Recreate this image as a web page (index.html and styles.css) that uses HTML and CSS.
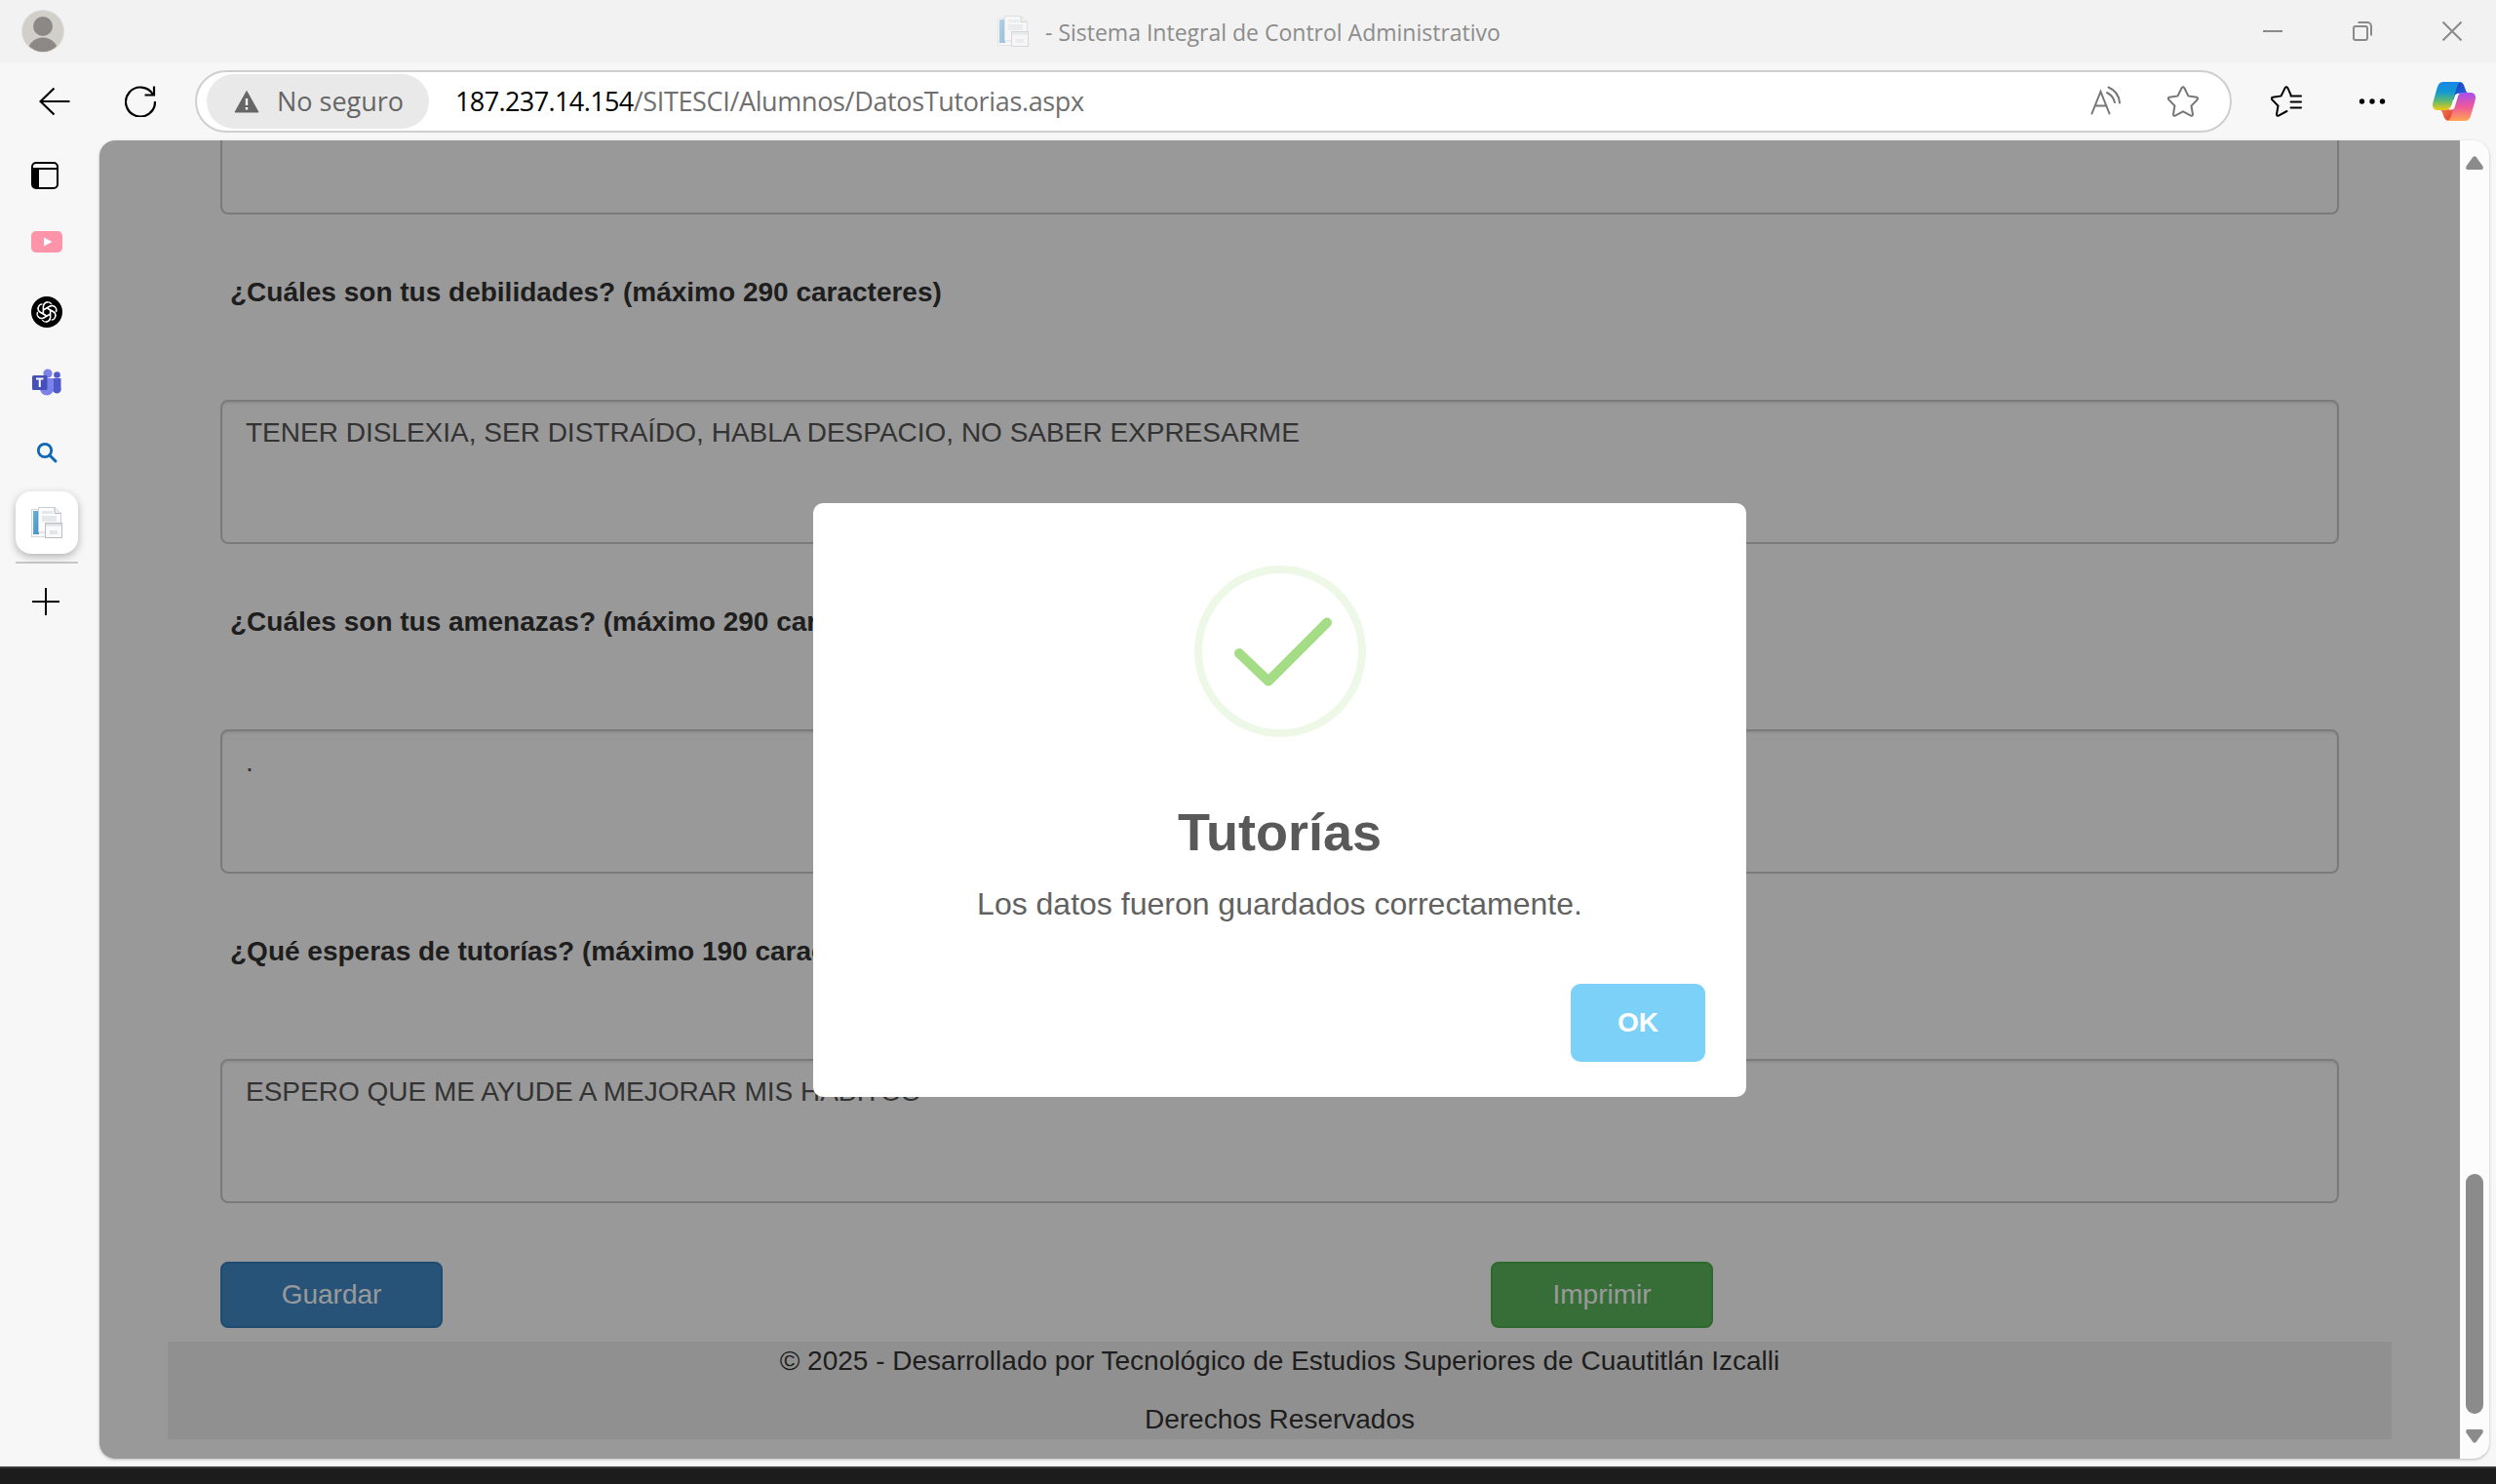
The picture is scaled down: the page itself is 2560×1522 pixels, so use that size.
FILE: index.html
```html
<!DOCTYPE html>
<html lang="es">
<head>
<meta charset="utf-8">
<title>Sistema Integral de Control Administrativo</title>
<link rel="stylesheet" href="styles.css">
</head>
<body>
<svg class="defs" width="0" height="0">
  <defs>
    <linearGradient id="page-blue" x1="0" y1="0" x2="1" y2="1"><stop offset="0" stop-color="#6db3dc"/><stop offset="1" stop-color="#3f8fc6"/></linearGradient>
    <linearGradient id="cp-left" x1="0" y1="0" x2="0" y2="1"><stop offset="0" stop-color="#1a86e8"/><stop offset=".35" stop-color="#1297d4"/><stop offset=".65" stop-color="#55b878"/><stop offset="1" stop-color="#f3cb10"/></linearGradient>
    <linearGradient id="cp-right" x1="0" y1="0" x2="0" y2="1"><stop offset="0" stop-color="#a54ff0"/><stop offset=".5" stop-color="#f0589a"/><stop offset="1" stop-color="#ffa552"/></linearGradient>
    <linearGradient id="cp-top" x1="0" y1="0" x2="1" y2="1"><stop offset="0" stop-color="#1440b8"/><stop offset="1" stop-color="#2a6ee8"/></linearGradient>
    <linearGradient id="cp-bottom" x1="0" y1="0" x2="1" y2="1"><stop offset="0" stop-color="#f9885a"/><stop offset="1" stop-color="#d9362c"/></linearGradient>
    <symbol id="doc" viewBox="0 0 32 32">
      <rect x=".5" y="2.500" width="20" height="28" fill="#fbfbfb" stroke="#d5d9dc"/>
      <rect x="2" y="4" width="6" height="24" fill="url(#page-blue)"/>
      <path d="M7.500 .5H24l6.500 6V26h-23z" fill="#fcfcfc" stroke="#c9cdd1"/>
      <path d="M24 .5v6h6.500" fill="#eee" stroke="#b5b9bd"/>
      <path d="M11 4h11v3H11zM11 9h15v6H11z" fill="#e5e8ea"/>
      <rect x="14.500" y="16.500" width="17" height="15" fill="#fafafa" stroke="#b9bdc1"/>
      <path d="M15 17h16v2.500H15z" fill="#dfe2e5"/><path d="M19 24h8v4h-8z" fill="#e3e6e9"/>
    </symbol>
  </defs>
</svg>

<header class="titlebar">
  <svg class="avatar" viewBox="0 0 44 44"><clipPath id="av"><circle cx="22" cy="22" r="21"/></clipPath><circle cx="22" cy="22" r="22" fill="#dddcd9"/><circle cx="22" cy="22" r="21" fill="#d0cfca"/><g clip-path="url(#av)" fill="#8c8885"><circle cx="22" cy="17" r="10"/><circle cx="22" cy="44.500" r="16"/></g></svg>
  <div class="window-title"><svg class="window-icon"><use href="#doc"/></svg><span>- Sistema Integral de Control Administrativo</span></div>
  <div class="window-controls">
    <svg viewBox="0 0 20 20"><path d="M0 10h20"/></svg>
    <svg viewBox="0 0 20 20"><rect x="1" y="5" width="14" height="14" rx="2"/><path d="M5.500 1H15a4 4 0 0 1 4 4v9.500"/></svg>
    <svg viewBox="0 0 20 20"><path d="M.5.5l19 19M19.500.5l-19 19"/></svg>
  </div>
</header>

<div class="toolbar">
  <svg class="nav-icon back" viewBox="0 0 32 32"><path d="M31.500 16H1.500M15.500 2.500L1.500 16l14 13.500"/></svg>
  <svg class="nav-icon reload" viewBox="0 0 32 32"><path d="M29 9A15 15 0 1 0 31 16M30 .5V9.500H20.500"/></svg>
  <div class="address">
    <div class="security">
      <svg class="warning" viewBox="0 0 26 24"><path d="M13 1.500L25 23H1z" fill="#666" stroke="#666" stroke-linejoin="round"/><path d="M11.800 9h2.400v7h-2.400zM11.800 18h2.400v2.400h-2.400z" fill="#fff"/></svg>
      <span>No seguro</span>
    </div>
    <div class="url"><b>187.237.14.154</b>/SITESCI/Alumnos/DatosTutorias.aspx</div>
    <svg class="bar-icon read" viewBox="0 0 32 32"><path d="M1.500 28.500L10.500 6l9 22.500M4.500 20.500h12M17 7a15 15 0 0 1 8 10M18.500 1.500a19 19 0 0 1 11.500 16"/></svg>
    <svg class="bar-icon" viewBox="0 0 32 32"><path d="M14.600 2.200q1.400-2 2.800 0l4 8.200 8.600 1.400q1.900.6.700 2.300l-6.200 6.400 1.500 8.800q-.1 2-2 1.300L16 26.400l-8 4.200q-1.900.7-2-1.300l1.500-8.800L1.300 14.100q-1.200-1.700.7-2.300l8.600-1.400z"/></svg>
  </div>
  <svg class="favorites" viewBox="0 0 32 32"><path d="M21 10.300L17.400 2.200q-1.400-2-2.800 0l-4 8.200-8.600 1.400q-1.900.6-.7 2.300l6.200 6.400L6 29.300q.1 2 2 1.300l8.500-4.600M20.500 10.500H31M20.500 16.500H31M20.500 22.500H31"/></svg>
  <svg class="more" viewBox="0 0 28 8"><circle cx="3.500" cy="4" r="2.700"/><circle cx="14" cy="4" r="2.700"/><circle cx="24.500" cy="4" r="2.700"/></svg>
  <svg class="copilot" viewBox="0 0 132 120">
    <path d="M62 0H80C93 0 96 8 100 20C103 30 106 34 112 35H84C74 36 70 42 66 56L60 50z" fill="url(#cp-top)"/>
    <path d="M70 120H52C39 120 36 112 32 100C29 90 26 86 20 85H48C58 84 62 78 66 64L72 70z" fill="url(#cp-bottom)"/>
    <path d="M34 0H92C80 1 77 8 73 22L60 66C56 80 50 86 36 87H16C1 87-3 77 2 60L14 18C18 6 23 0 34 0z" fill="url(#cp-left)"/>
    <path d="M98 120H40C52 119 55 112 59 98L72 54C76 40 82 34 96 33H116C131 33 135 43 130 60L118 102C114 114 109 120 98 120z" fill="url(#cp-right)"/>
    <path d="M76 36C84 34 80 38 78 44L68 78C66 84 60 87 50 86C57 82 59 75 62 66L67 47C69 40 71 37 76 36z" fill="#fff"/>
  </svg>
</div>

<div class="workspace">
  <nav class="tabs">
    <div class="tab"><svg class="panel" viewBox="0 0 28 28"><rect x="1" y="1" width="26" height="26" rx="4" fill="none" stroke="#000" stroke-width="2"/><path d="M1 7h26" stroke="#000" stroke-width="2"/><path d="M1 7h7v20H4q-3 0-3-3z"/></svg></div>
    <div class="tab tab-video"><svg width="32" height="22" viewBox="0 0 32 22"><rect width="32" height="22" rx="5" fill="#fd94aa"/><path d="M13 6.500l8.500 4.500-8.500 4.500z" fill="#fff"/></svg></div>
    <div class="tab"><svg width="32" height="32" viewBox="0 0 32 32"><circle cx="16" cy="16" r="16"/><g fill="none" stroke="#fff" stroke-width="1.300" stroke-linejoin="round"><path id="knot" d="M12.500 18.200V10.300a4.500 4.500 0 0 1 8.300-2.300M12.500 13.800l6.500-3.800a4.500 4.500 0 0 1 6.200 1.800"/><use href="#knot" transform="rotate(60 16 16)"/><use href="#knot" transform="rotate(120 16 16)"/><use href="#knot" transform="rotate(180 16 16)"/><use href="#knot" transform="rotate(240 16 16)"/><use href="#knot" transform="rotate(300 16 16)"/></g></svg></div>
    <div class="tab"><svg width="32" height="32" viewBox="0 0 32 32"><circle cx="26.500" cy="8.500" r="3.300" fill="#5059c9"/><path d="M22 12h8.500v9.500a4.500 4.500 0 0 1-8.500 3z" fill="#5059c9"/><circle cx="17" cy="7" r="4.600" fill="#7b83eb"/><path d="M9 12h14v10.500a7 7 0 0 1-14 0z" fill="#7b83eb"/><rect x="1" y="9" width="15.500" height="15" rx="1.500" fill="#464eb8"/><path d="M5 12.500h7.500M8.750 12.500v8.500" stroke="#fff" stroke-width="2"/></svg></div>
    <div class="tab"><svg width="32" height="32" viewBox="0 0 32 32" fill="none" stroke="#0f67b8"><circle cx="14" cy="14" r="6.700" stroke-width="2.800"/><path d="M19 19l6 6" stroke-width="3" stroke-linecap="round"/></svg></div>
    <div class="tab"><div class="active-tab"><svg width="32" height="32"><use href="#doc"/></svg></div></div>
    <div class="tab-divider"></div>
    <div class="tab tab-new"><svg width="28" height="28" viewBox="0 0 28 28"><path d="M0 14h28M14 0v28" stroke="#000" stroke-width="2"/></svg></div>
  </nav>

  <div class="viewport">
    <main class="page">
      <form class="form">
        <div class="field field-cut"></div>
        <label class="question">¿Cuáles son tus debilidades? (máximo 290 caracteres)</label>
        <div class="field">TENER DISLEXIA, SER DISTRAÍDO, HABLA DESPACIO, NO SABER EXPRESARME</div>
        <label class="question">¿Cuáles son tus amenazas? (máximo 290 caracteres)</label>
        <div class="field">.</div>
        <label class="question">¿Qué esperas de tutorías? (máximo 190 caracteres)</label>
        <div class="field">ESPERO QUE ME AYUDE A MEJORAR MIS HABITOS</div>
        <div class="actions"><div class="btn btn-primary">Guardar</div><div class="btn btn-success">Imprimir</div></div>
      </form>
      <footer class="footer"><p>© 2025 - Desarrollado por Tecnológico de Estudios Superiores de Cuautitlán Izcalli</p><p>Derechos Reservados</p></footer>
      <div class="overlay">
        <div class="modal">
          <svg class="success" viewBox="0 0 176 176" fill="none"><circle cx="88" cy="88" r="84" stroke="#edf8e7" stroke-width="8"/><path d="M46 90L76 118.500L136 58.500" stroke="#a5dc86" stroke-width="10" stroke-linecap="round" stroke-linejoin="round"/></svg>
          <h1>Tutorías</h1>
          <p>Los datos fueron guardados correctamente.</p>
          <div class="ok">OK</div>
        </div>
      </div>
    </main>
    <div class="scrollbar">
      <svg width="18" height="14" viewBox="0 0 18 14"><path d="M7 1.500q2-2.500 4 0l6.500 9q1 3.300-1.500 3.500H2Q-.500 13.800.5 10.500z"/></svg>
      <div class="thumb"></div>
      <svg width="18" height="14" viewBox="0 0 18 14"><path d="M7 12.500q2 2.500 4 0l6.500-9Q18.500.2 16 0H2Q-.500.2.500 3.500z"/></svg>
    </div>
  </div>
</div>
<div class="taskbar"></div>
</body>
</html>
```
FILE: styles.css
```css
* { box-sizing: border-box; }

body {
  margin: 0;
  width: 2560px;
  height: 1522px;
  display: flex;
  flex-direction: column;
  overflow: hidden;
  background: #f7f7f7;
  font-family: "Liberation Sans", Arial, sans-serif;
  font-size: 28px;
  line-height: 40px;
}

svg { display: block; flex: none; }
.defs { position: absolute; }

/* Window title bar */
.titlebar {
  height: 64px;
  flex: none;
  display: flex;
  align-items: center;
  justify-content: space-between;
  background: #f2f2f2;
  padding: 0 35px 0 22px;
  font-family: "Open Sans", "Noto Sans", sans-serif;
}
.avatar { width: 44px; height: 44px; }
.window-title {
  display: flex;
  align-items: center;
  gap: 17px;
  margin: 0 auto 0 957px;
  color: #8c8c8c;
  font-size: 23px;
  white-space: nowrap;
}
.window-title span { padding-top: 2px; }
.window-icon { width: 32px; height: 32px; opacity: .5; }
.window-controls { display: flex; gap: 72px; }
.window-controls svg { width: 20px; height: 20px; fill: none; stroke: #8a8a8a; stroke-width: 2; }

/* Navigation toolbar */
.toolbar {
  height: 80px;
  flex: none;
  display: flex;
  align-items: center;
  padding-left: 40px;
  font-family: "Open Sans", "Noto Sans", sans-serif;
}
.nav-icon { width: 32px; height: 32px; fill: none; stroke: #000; stroke-width: 2.200; }
.reload { margin: 0 40px 0 56px; }
.address {
  width: 2089px;
  height: 64px;
  display: flex;
  align-items: center;
  border: 2px solid #cfcfcf;
  border-radius: 32px;
  background: #fff;
  padding: 0 32px 0 10px;
}
.security {
  width: 228px;
  height: 56px;
  border-radius: 28px;
  background: #e9e9e9;
  color: #666;
  display: flex;
  align-items: center;
  gap: 18px;
  padding-left: 28px;
  white-space: nowrap;
}
.security span { font-size: 27px; }
.warning { width: 26px; height: 24px; }
.url { margin-left: 27px; flex: 1; color: #6f6f6f; white-space: nowrap; font-size: 27px; letter-spacing: -.35px; }
.url b { color: #000; font-weight: 400; letter-spacing: -.6px; }
.bar-icon { width: 32px; height: 32px; fill: none; stroke: #767676; stroke-width: 2; stroke-linecap: round; }
.read { margin-right: 47px; }
.favorites { width: 32px; height: 32px; margin-left: 40px; fill: none; stroke: #000; stroke-width: 2; stroke-linecap: round; }
.more { width: 28px; height: 8px; margin-left: 58px; }
.copilot { width: 44px; height: 40px; margin-left: 48px; }

/* Vertical tabs and page */
.workspace { display: flex; height: 1352px; flex: none; }
.tabs { width: 102px; flex: none; }
.tab { width: 96px; height: 72px; display: flex; align-items: center; justify-content: center; }
.panel { width: 28px; height: 28px; margin-right: 4px; }
.tab-video { height: 64px; margin-bottom: 4px; }
.active-tab {
  width: 64px;
  height: 64px;
  border-radius: 16px;
  background: #fff;
  box-shadow: 0 3px 8px rgba(0, 0, 0, .28);
  display: flex;
  align-items: center;
  justify-content: center;
}
.tab-divider { width: 64px; height: 2px; background: #c8c8c8; margin: 4px 0 3px 16px; }
.tab-new { width: 94px; }

.viewport {
  width: 2451px;
  display: flex;
  border-radius: 16px;
  overflow: hidden;
  background: #fcfcfc;
  box-shadow: 0 1px 3px rgba(0, 0, 0, .25);
}
.page {
  position: relative;
  width: 2421px;
  padding: 0 70px;
  background: #fff;
  color: #333;
}
.form { padding: 0 54px; display: flex; flex-direction: column; }
.field {
  height: 148px;
  border: 2px solid #ccc;
  border-radius: 8px;
  box-shadow: inset 0 2px 2px rgba(0, 0, 0, .075);
  padding: 12px 24px;
  color: #555;
}
.field-cut { height: 76px; border-top: 0; border-radius: 0 0 8px 8px; box-shadow: none; }
.question { margin: 60px 10px 90px; font-weight: 700; }
.actions { display: flex; gap: 1075px; margin: 60px 0 14px; }
.btn {
  width: 228px;
  height: 68px;
  border: 2px solid;
  border-radius: 8px;
  color: #fff;
  text-align: center;
  padding: 12px;
}
.btn-primary { background: #428bca; border-color: #357ebd; }
.btn-success { background: #5cb85c; border-color: #4cae4c; }
.footer { height: 100px; background: #f1f1f1; text-align: center; }
.footer p { margin: 0 0 20px; }

/* Confirmation dialog over the form */
.overlay {
  position: absolute;
  inset: 0;
  background: rgba(0, 0, 0, .4);
  display: flex;
  align-items: flex-start;
  justify-content: center;
  padding-top: 372px;
}
.modal {
  width: 957px;
  height: 609px;
  border-radius: 10px;
  background: #fff;
  padding: 64px 42px 0;
  display: flex;
  flex-direction: column;
  align-items: center;
}
.success { width: 176px; height: 176px; }
.modal h1 { margin: 67px 0 24px; font-size: 54px; line-height: 60px; color: #595959; }
.modal p { margin: 0 0 62px; font-size: 32px; color: #616161; }
.ok {
  align-self: flex-end;
  width: 138px;
  height: 80px;
  border-radius: 10px;
  background: #7cd1f9;
  color: #fff;
  font-weight: 700;
  line-height: 80px;
  text-align: center;
}

.scrollbar {
  width: 30px;
  display: flex;
  flex-direction: column;
  align-items: center;
  padding: 16px 0;
  fill: #8b8b8b;
}
.thumb { width: 18px; height: 246px; border-radius: 9px; background: #8b8b8b; margin: auto 0 16px; }

.taskbar { height: 18px; margin-top: 8px; background: #1c1c1c; border-top: 2px solid #3a3a3a; }
```
